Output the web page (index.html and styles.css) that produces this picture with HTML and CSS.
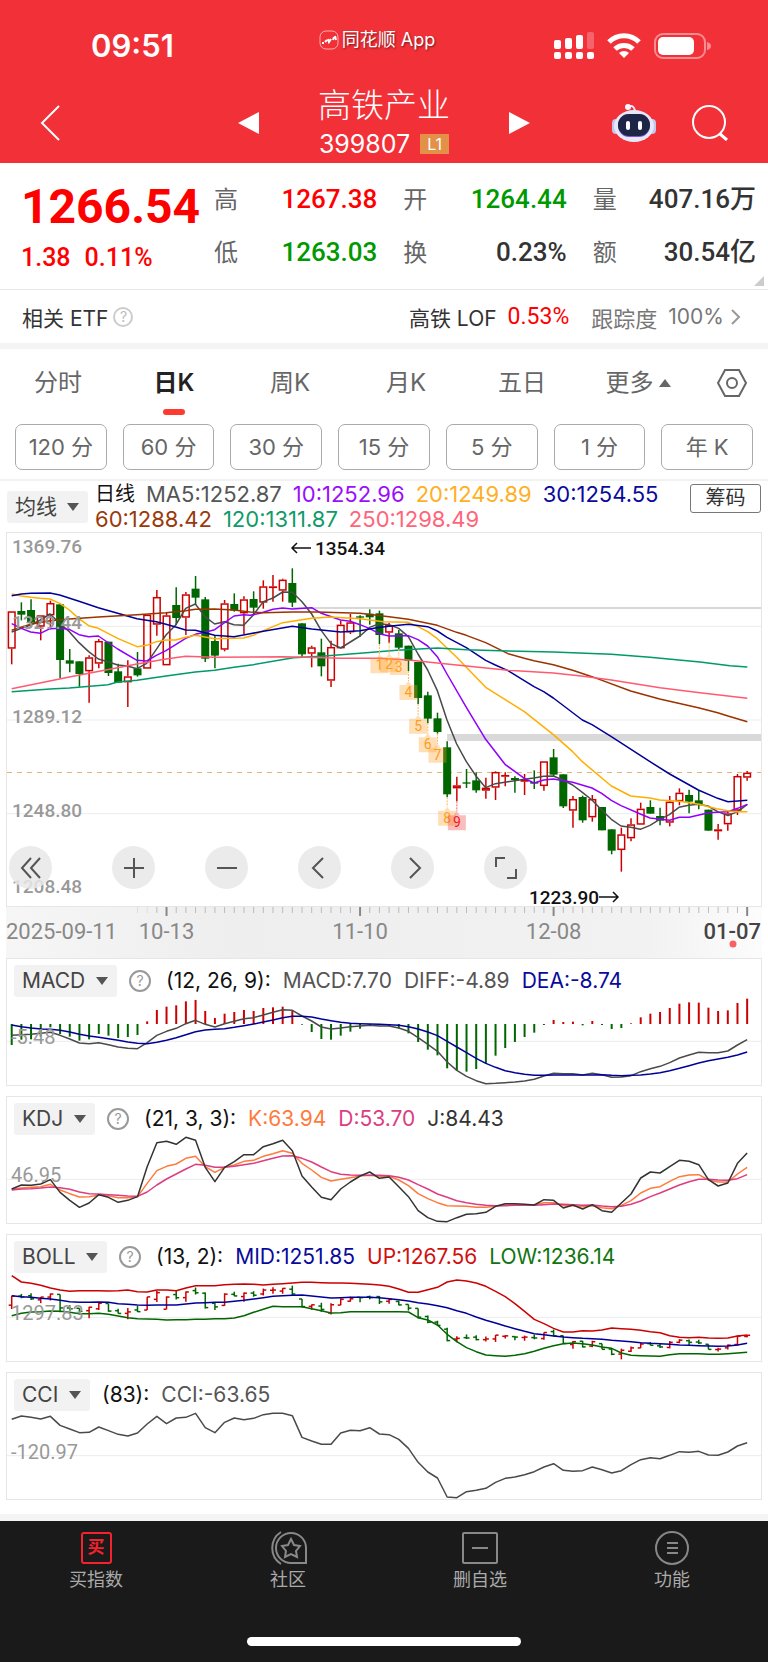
FILE: index.html
```html
<!DOCTYPE html>
<html lang="zh-CN">

<head>
    <meta charset="UTF-8" />
    <meta name="viewport" content="width=device-width, initial-scale=1.0" />
    <title>高铁产业 399807</title>
    <link rel="stylesheet" href="styles.css">
</head>

<body>
    <header>
        <div class="status">
            <span class="time">09:51</span>
            <span class="app">
                <svg width="20" height="20" viewBox="0 0 20 20" fill="none" stroke="#fff">
                    <rect x="1" y="1" width="18" height="18" rx="6" stroke-opacity=".6" />
                    <path d="M3 13h2M6 12l2-2M9 9l1 3 2-3M14 10l1-3M16 6l1 4" stroke-width="2" />
                </svg>
                同花顺 App
            </span>
            <span class="signals">
                <svg width="40" height="28" viewBox="0 0 40 28" fill="#fff">
                    <rect x="0" y="8" width="7" height="9" rx="2" />
                    <rect x="11" y="6" width="7" height="11" rx="2" />
                    <rect x="22" y="3" width="7" height="14" rx="2" />
                    <rect x="33" y="0" width="7" height="17" rx="2" opacity=".25" />
                    <rect x="0" y="20" width="7" height="7" rx="2" />
                    <rect x="11" y="20" width="7" height="7" rx="2" />
                    <rect x="22" y="20" width="7" height="7" rx="2" />
                    <rect x="33" y="20" width="7" height="7" rx="2" />
                </svg>
                <svg width="34" height="26" viewBox="0 0 34 26" fill="none" stroke="#fff" stroke-width="5">
                    <path d="M2 9a21 21 0 0 1 30 0M8 16a13 13 0 0 1 18 0" />
                    <path d="M17 25l-5-5a7 7 0 0 1 10 0z" fill="#fff" stroke="none" />
                </svg>
                <svg width="57" height="26" viewBox="0 0 57 26">
                    <rect x="1" y="1" width="50" height="24" rx="8" fill="none" stroke="#fff" stroke-opacity=".45" stroke-width="2" />
                    <rect x="4" y="4" width="36" height="18" rx="5" fill="#fff" />
                    <path d="M53 9q4 1 4 4t-4 4z" fill="#fff" opacity=".45" />
                </svg>
            </span>
        </div>
        <nav class="titlebar">
            <button class="back" aria-label="返回">
                <svg width="20" height="36" viewBox="0 0 20 36" fill="none" stroke="#fff" stroke-width="2"><path d="M19 1L2 18l17 17" /></svg>
            </button>
            <div class="switcher">
                <button aria-label="上一个"><svg width="21" height="22" viewBox="0 0 21 22"><path d="M21 0v22L0 11z" fill="#fff" /></svg></button>
                <div class="stock">
                    <h1>高铁产业</h1>
                    <p>399807<span class="level">L1</span></p>
                </div>
                <button aria-label="下一个"><svg width="21" height="22" viewBox="0 0 21 22"><path d="M0 0v22l21-11z" fill="#fff" /></svg></button>
            </div>
            <div class="tools">
                <button aria-label="助手">
                    <svg width="44" height="40" viewBox="0 0 44 40">
                        <path d="M16 4q6-3 7 4" fill="none" stroke="#e8ecff" stroke-width="2" />
                        <circle cx="16" cy="4" r="3" fill="#f4f5ff" />
                        <rect x="0" y="16" width="9" height="15" rx="4" fill="#c3c6ee" />
                        <rect x="35" y="16" width="9" height="15" rx="4" fill="#c3c6ee" />
                        <ellipse cx="22" cy="23" rx="20" ry="16" fill="#e6e8f8" />
                        <rect x="6" y="11" width="32" height="23" rx="11" fill="#7a55d8" />
                        <rect x="6" y="11" width="32" height="22" rx="11" fill="#1d2647" />
                        <rect x="14" y="18" width="4" height="9" rx="2" fill="#fff" />
                        <rect x="26" y="18" width="4" height="9" rx="2" fill="#fff" />
                    </svg>
                </button>
                <button aria-label="搜索">
                    <svg width="36" height="36" viewBox="0 0 36 36" fill="none" stroke="#fff" stroke-width="2"><circle cx="17" cy="17" r="16" /><path d="M28 29l7 6" stroke-width="3" /></svg>
                </button>
            </div>
        </nav>
    </header>

    <main>
        <section class="quote">
            <div class="price">
                <strong>1266.54</strong>
                <p><span>1.38</span><span>0.11%</span></p>
            </div>
            <dl class="facts">
                <div><dt>高</dt><dd class="up">1267.38</dd></div>
                <div><dt>开</dt><dd class="down">1264.44</dd></div>
                <div><dt>量</dt><dd>407.16万</dd></div>
                <div><dt>低</dt><dd class="down">1263.03</dd></div>
                <div><dt>换</dt><dd>0.23%</dd></div>
                <div><dt>额</dt><dd>30.54亿</dd></div>
            </dl>
            <span class="corner"></span>
        </section>

        <section class="etf">
            <span>相关 ETF</span>
            <span class="help light">?</span>
            <a href="#lof">
                <span>高铁 LOF</span>
                <b>0.53%</b>
                <span class="muted">跟踪度</span>
                <span class="muted">100%</span>
                <svg width="10" height="16" viewBox="0 0 10 16" fill="none" stroke="#999" stroke-width="2"><path d="M1 1l7 7-7 7" /></svg>
            </a>
        </section>

        <nav class="tabs">
            <a href="#min">分时</a>
            <a href="#day" class="active">日K</a>
            <a href="#week">周K</a>
            <a href="#month">月K</a>
            <a href="#five">五日</a>
            <a href="#more">更多<i></i></a>
            <button aria-label="设置">
                <svg width="30" height="28" viewBox="0 0 30 28" fill="none" stroke="#666" stroke-width="2"><path d="M8 1h14l7 13-7 13H8L1 14z" /><circle cx="15" cy="14" r="5" /></svg>
            </button>
        </nav>

        <div class="periods">
            <button>120 分</button>
            <button>60 分</button>
            <button>30 分</button>
            <button>15 分</button>
            <button>5 分</button>
            <button>1 分</button>
            <button>年 K</button>
        </div>

        <section class="averages">
            <label class="pick"><select aria-label="指标"><option>均线</option></select></label>
            <p class="values">
                <span class="black period">日线</span>
                <span class="ma5">MA5:1252.87</span>
                <span class="ma10">10:1252.96</span>
                <span class="ma20">20:1249.89</span>
                <span class="ma30">30:1254.55</span>
                <span class="ma60">60:1288.42</span>
                <span class="ma120">120:1311.87</span>
                <span class="ma250">250:1298.49</span>
            </p>
            <button class="chips">筹码</button>
        </section>

        <section class="chart">
            <svg id="kline" viewBox="0 0 754 373"></svg>
            <div class="controls">
                <button aria-label="最左"><svg viewBox="0 0 22 22"><path d="M11 1L2 11l9 10M20 1l-9 10 9 10" /></svg></button>
                <button aria-label="放大"><svg viewBox="0 0 22 22"><path d="M11 1v20M1 11h20" /></svg></button>
                <button aria-label="缩小"><svg viewBox="0 0 22 22"><path d="M1 11h20" /></svg></button>
                <button aria-label="左移"><svg viewBox="0 0 22 22"><path d="M14 1L4 11l10 10" /></svg></button>
                <button aria-label="右移"><svg viewBox="0 0 22 22"><path d="M8 1l10 10L8 21" /></svg></button>
                <button aria-label="全屏"><svg viewBox="0 0 22 22"><path d="M1 10V1h9M21 12v9h-9" /></svg></button>
            </div>
        </section>
        <svg id="timeline" class="timeline" viewBox="0 0 756 51"></svg>

        <section class="panel">
            <header>
                <label class="pick"><select aria-label="指标"><option>MACD</option></select></label>
                <span class="help">?</span>
                <span class="black">(12, 26, 9):</span>
                <span class="ma5">MACD:7.70</span>
                <span class="ma5">DIFF:-4.89</span>
                <span class="ma30">DEA:-8.74</span>
            </header>
            <svg id="macd" viewBox="0 0 754 85"></svg>
        </section>

        <section class="panel">
            <header>
                <label class="pick"><select aria-label="指标"><option>KDJ</option></select></label>
                <span class="help">?</span>
                <span class="black">(21, 3, 3):</span>
                <span class="k">K:63.94</span>
                <span class="d">D:53.70</span>
                <span class="j">J:84.43</span>
            </header>
            <svg id="kdj" viewBox="0 0 754 85"></svg>
        </section>

        <section class="panel">
            <header>
                <label class="pick"><select aria-label="指标"><option>BOLL</option></select></label>
                <span class="help">?</span>
                <span class="black">(13, 2):</span>
                <span class="ma30">MID:1251.85</span>
                <span class="upper">UP:1267.56</span>
                <span class="lower">LOW:1236.14</span>
            </header>
            <svg id="boll" viewBox="0 0 754 85"></svg>
        </section>

        <section class="panel">
            <header>
                <label class="pick"><select aria-label="指标"><option>CCI</option></select></label>
                <span class="black">(83):</span>
                <span class="ma5">CCI:-63.65</span>
            </header>
            <svg id="cci" viewBox="0 0 754 85"></svg>
        </section>
    </main>

    <footer>
        <nav>
            <a href="#buy">
                <span class="buy">买</span>
                买指数
            </a>
            <a href="#community">
                <svg width="38" height="34" viewBox="0 0 38 34">
                    <path d="M12 1A19 19 0 0 0 12 33M22 2a15 15 0 1 0 0 30h15V17A15 15 0 0 0 22 2z" />
                    <path d="M22 8l3 6 6 1-4 5 1 6-6-3-6 3 1-6-4-5 6-1z" />
                </svg>
                社区
            </a>
            <a href="#remove">
                <svg width="36" height="34" viewBox="0 0 36 34"><rect x="1" y="2" width="34" height="30" rx="1" /><path d="M10 17h16" /></svg>
                删自选
            </a>
            <a href="#tools">
                <svg width="34" height="34" viewBox="0 0 34 34"><circle cx="17" cy="17" r="16" /><path d="M12 12h11M12 17h11M12 22h11" /></svg>
                功能
            </a>
        </nav>
        <div class="homebar"></div>
    </footer>

    <script src="app.js"></script>
</body>

</html>
```

FILE: styles.css
```css
/* Reset CSS */
* {
    margin: 0;
    padding: 0;
    box-sizing: border-box;
}

/* Global Styles */
body {
    font-family: Inter, "Noto Sans CJK SC", sans-serif;
    background-color: #fff;
    color: #333;
}

button,
select {
    font: inherit;
    color: inherit;
    background: none;
    border: none;
    cursor: pointer;
}

a {
    color: inherit;
    text-decoration: none;
}

svg {
    display: block;
    flex-shrink: 0;
}

/* Header */
body > header {
    background-color: #f23038;
    color: #fff;
}

.status {
    display: grid;
    grid-template-columns: 1fr auto 1fr;
    align-items: center;
    height: 75px;
    padding: 16px 57px 0 91px;
}

.time {
    font-size: 31px;
    font-weight: 600;
    line-height: 40px;
}

.app {
    display: flex;
    align-items: center;
    gap: 3px;
    margin: 0 48px 12px 0;
    font-size: 18px;
    line-height: 24px;
    text-shadow: 1px 1px 2px rgba(0, 0, 0, 0.5);
}

.signals {
    display: flex;
    align-items: center;
    justify-content: flex-end;
    gap: 13px;
}

.titlebar {
    display: grid;
    grid-template-columns: 1fr auto 1fr;
    align-items: center;
    height: 88px;
    padding: 8px 40px 0;
}

.switcher {
    display: flex;
    align-items: center;
    gap: 59px;
}

.stock {
    text-align: center;
}

.stock h1 {
    font-size: 33px;
    font-weight: 300;
    line-height: 42px;
}

.stock p {
    display: flex;
    align-items: center;
    justify-content: center;
    gap: 10px;
    font-size: 25px;
    line-height: 36px;
}

.level {
    padding: 0 7px;
    background-color: #e39048;
    font-size: 16px;
    line-height: 20px;
}

.tools {
    display: flex;
    align-items: center;
    justify-content: flex-end;
    gap: 36px;
}

/* Quote */
.quote {
    position: relative;
    display: flex;
    height: 127px;
    padding: 10px 12px 0 21px;
    border-bottom: 1px solid #e8e8e8;
}

.price {
    width: 193px;
    color: #f00;
    font-family: Roboto, sans-serif;
    font-weight: 500;
}

.price strong {
    display: block;
    font-size: 48px;
    font-weight: 700;
    line-height: 68px;
}

.price p {
    display: flex;
    gap: 14px;
    font-size: 25px;
    line-height: 34px;
}

.facts {
    flex: 1;
    display: grid;
    grid-template-columns: repeat(3, 1fr);
    grid-auto-rows: 53px;
    column-gap: 26px;
}

.facts div {
    display: flex;
    align-items: center;
    justify-content: space-between;
    font-size: 26px;
    line-height: 53px;
}

.facts dt {
    color: #666;
    font-size: 24px;
}

.facts dd {
    font-family: Roboto, "Noto Sans CJK SC", sans-serif;
    font-weight: 500;
}

.facts .up {
    color: #f00;
}

.facts .down {
    color: #090;
}

.corner {
    position: absolute;
    right: 4px;
    bottom: 3px;
    border: 5px solid;
    border-color: transparent #ccc #ccc transparent;
}

.etf {
    display: flex;
    align-items: center;
    height: 59px;
    padding: 0 27px 0 22px;
    border-bottom: 6px solid #f4f4f4;
    font-size: 21px;
}

.etf a {
    display: flex;
    align-items: center;
    gap: 11px;
    margin-left: auto;
}

.etf b {
    color: #f00;
    font-family: Roboto, sans-serif;
    font-size: 23px;
    font-weight: 400;
}

.etf .muted {
    color: #777;
}

.etf b + .muted {
    margin-left: 11px;
    font-size: 22px;
}

.etf svg {
    margin-left: -4px;
}

.help {
    width: 22px;
    height: 22px;
    border: 2px solid #999;
    border-radius: 50%;
    color: #999;
    font-size: 14px;
    line-height: 18px;
    text-align: center;
}

.etf .help {
    width: 20px;
    height: 20px;
    margin-left: 5px;
    line-height: 16px;
}

.light {
    border-color: #ccc;
    color: #bbb;
}

/* Tabs */
.tabs {
    display: flex;
    height: 75px;
    color: #666;
    font-size: 24px;
    line-height: 68px;
}

.tabs a {
    position: relative;
    flex: 1;
    display: flex;
    align-items: center;
    justify-content: center;
    height: 68px;
}

.tabs button {
    display: flex;
    align-items: center;
    justify-content: center;
    width: 72px;
    height: 68px;
}

.tabs .active {
    color: #222;
    font-weight: 600;
}

.tabs .active::after {
    content: "";
    position: absolute;
    bottom: 2px;
    width: 22px;
    height: 6px;
    border-radius: 3px;
    background-color: #ff3a30;
}

.tabs i {
    margin-left: 5px;
    border: 6px solid transparent;
    border-top: none;
    border-bottom: 8px solid #666;
}

.periods {
    display: flex;
    gap: 16px;
    height: 57px;
    padding: 0 15px 10px;
    border-bottom: 2px solid #f2f2f2;
}

.periods button {
    flex: 1;
    height: 46px;
    border: 1px solid #aaa;
    border-radius: 7px;
    color: #666;
    font-size: 22px;
    line-height: 44px;
    white-space: nowrap;
}

/* Indicator values */
.averages {
    display: flex;
    align-items: center;
    height: 51px;
    padding: 0 7px;
}

.values {
    flex: 1;
    display: flex;
    flex-wrap: wrap;
    column-gap: 11px;
    padding-left: 7px;
    font-size: 22px;
    line-height: 25px;
    white-space: nowrap;
}

.period {
    font-size: 20px;
}

.chips {
    align-self: flex-start;
    width: 71px;
    height: 29px;
    margin-top: 3px;
    border: 1px solid #777;
    border-radius: 3px;
    font-size: 20px;
    line-height: 27px;
}

.pick {
    display: flex;
    align-items: center;
    gap: 10px;
    height: 32px;
    padding: 0 9px 0 8px;
    border-radius: 3px;
    background-color: #f2f2f2;
    color: #444;
    font-size: 21px;
}

.pick select {
    appearance: none;
    line-height: 32px;
}

.pick::after {
    content: "";
    border: 6px solid transparent;
    border-top: 8px solid #555;
    border-bottom: none;
}

.black { color: #111; }
.ma5 { color: #555; }
.ma10 { color: #9a0ffb; }
.ma20 { color: #ffb01f; }
.ma30 { color: #0a0a9c; }
.ma60 { color: #993a0c; }
.ma120 { color: #109b6a; }
.ma250 { color: #ff6479; }
.k { color: #ff7a3c; }
.d { color: #dd3d80; }
.j { color: #333; }
.upper { color: #d01010; }
.lower { color: #107510; }

/* Charts */
.chart {
    position: relative;
    margin: 0 6px;
    border: 1px solid #e6e6e6;
}

.chart svg,
.panel svg {
    width: 100%;
    height: auto;
    overflow: visible;
}

.chart text,
.panel text,
.timeline text {
    font-family: Roboto, sans-serif;
    font-size: 19px;
    font-weight: 500;
    fill: #999;
}

.panel text {
    font-size: 20px;
    font-weight: 400;
}

.chart .extreme {
    fill: #111;
}

.chart .mark {
    font-size: 14px;
    font-weight: 400;
    text-anchor: middle;
}

.timeline text {
    font-size: 22px;
    font-weight: 400;
    fill: #888;
}

.timeline .middle {
    text-anchor: middle;
}

.timeline .last {
    font-weight: 500;
    text-anchor: end;
    fill: #444;
}

.controls {
    position: absolute;
    left: 2px;
    bottom: 17px;
    display: flex;
    gap: 50px;
}

.controls button {
    display: flex;
    align-items: center;
    justify-content: center;
    width: 43px;
    height: 43px;
    border-radius: 50%;
    background-color: rgba(232, 232, 232, 0.85);
}

.controls button:first-child {
    margin-right: 10px;
}

.controls svg {
    width: 22px;
    height: 22px;
    fill: none;
    stroke: #555;
    stroke-width: 2;
}

.timeline {
    width: calc(100% - 12px);
    margin: 0 6px;
    background: linear-gradient(90deg, #f6f6f6, #eee 30%, #f2f2f2 85%, #fcfcfc);
}

.panel {
    margin: 0 6px 10px;
    border: 1px solid #e6e6e6;
}

.panel header {
    display: flex;
    align-items: center;
    gap: 12px;
    height: 41px;
    padding: 2px 7px 0;
    font-size: 21px;
    white-space: nowrap;
}

.panel .help {
    margin-right: 3px;
}

/* Footer */
footer {
    height: 148px;
    margin-top: 14px;
    padding-top: 10px;
    border-top: 7px solid #f4f4f4;
    background-color: #1a1a1a;
}

footer nav {
    display: flex;
    height: 106px;
}

footer a {
    flex: 1;
    display: flex;
    flex-direction: column;
    align-items: center;
    color: #aaa;
    font-size: 18px;
    line-height: 30px;
}

footer a svg {
    fill: none;
    stroke: #888;
    stroke-width: 2;
}

.buy {
    width: 31px;
    height: 32px;
    margin: 1px 0;
    border: 2px solid #f5222d;
    border-radius: 3px;
    color: #f5222d;
    font-size: 17px;
    font-weight: 700;
    line-height: 27px;
    text-align: center;
}

.homebar {
    width: 274px;
    height: 9px;
    margin: 0 auto;
    border-radius: 5px;
    background-color: #fff;
}
```

FILE: app.js
```js
// Candles: color, high, body top, body bottom, low (thirds of a pixel)
var candles = [
    "r 244 244 356 403", "g 217 243 254 271", "g 208 240 278 292", "r 256 256 290 331", "r 212 219 256 298",
    "g 223 223 390 444", "g 357 391 401 427", "g 394 394 432 470", "r 376 382 424 518", "r 327 333 401 415",
    "g 335 335 429 438", "g 401 424 458 458", "r 391 439 457 531", "g 366 415 436 440", "r 254 254 416 416",
    "r 180 201 284 317", "r 248 256 406 406", "g 172 225 264 285", "r 186 193 263 315", "g 138 176 203 225",
    "g 201 208 386 396", "g 316 333 377 415", "r 210 220 359 364", "g 190 222 242 245", "r 199 208 250 313",
    "g 184 207 233 252", "r 151 169 218 236", "r 135 169 172 215", "r 146 149 182 215", "g 115 159 218 231",
    "g 280 280 373 384", "r 347 352 371 412", "g 326 367 409 439", "r 332 351 452 471", "r 272 284 355 355",
    "r 252 277 307 312", "g 256 259 263 320", "g 238 251 262 284", "g 242 250 315 342", "r 278 285 308 338",
    "g 300 310 353 358", "g 347 347 393 423", "g 396 396 504 522", "g 485 496 566 580", "g 548 565 606 611",
    "g 634 652 793 802", "r 740 766 775 814", "g 717 757 761 774", "g 727 751 781 788", "r 743 773 782 806",
    "r 724 726 773 810", "r 727 735 740 769", "g 739 744 750 788", "r 732 750 755 795", "g 721 756 761 777",
    "r 694 694 768 782", "g 657 682 734 740", "g 733 733 829 834", "r 798 807 842 893", "g 797 801 871 878",
    "r 795 807 862 875", "g 831 831 901 901", "g 898 898 962 973", "r 893 913 960 1025", "r 865 883 925 934",
    "r 818 836 884 884", "g 811 831 851 851", "g 833 858 872 886", "r 798 815 878 889", "r 775 788 814 826",
    "g 779 795 815 850", "g 782 811 823 838", "g 839 839 902 902", "r 882 898 904 929", "r 843 850 883 902",
    "r 732 738 842 855", "r 723 728 743 752"
].map(function (row) {
    var c = row.split(" ");
    return { color: c[0] === "r" ? "#cc0000" : "#006600", high: +c[1], top: +c[2], bottom: +c[3], low: +c[4] };
});

// Moving averages as x,y pairs
var averages = {
    "#4a4a4a": "35,306 64,295 92,285 121,270 150,252 179,280 208,305 237,338 266,365 295,387 324,395 353,405 382,408 411,416 440,400 469,358 498,315 527,285 557,235 586,222 615,260 644,282 673,275 702,284 731,286 760,255 790,215 819,204 848,186 877,187 906,215 935,252 964,302 993,341 1022,354 1051,336 1080,318 1109,292 1138,281 1167,284 1196,295 1225,320 1254,372 1283,420 1312,482 1341,570 1370,642 1399,695 1428,738 1457,773 1486,761 1524,755 1573,748 1602,744 1631,739 1660,738 1689,750 1718,765 1747,787 1776,810 1805,840 1834,868 1863,888 1892,892 1921,898 1950,886 1979,868 2008,854 2037,832 2066,826 2095,823 2124,828 2153,845 2184,857 2213,845 2242,823",
    "#9000ff": "35,281 64,295 92,306 121,310 150,296 179,295 208,298 237,314 266,320 295,318 353,357 411,391 440,393 469,376 498,362 557,325 586,313 615,307 644,299 702,258 731,254 750,256 780,250 819,238 848,234 877,237 935,233 964,250 1022,270 1051,274 1080,284 1109,296 1138,311 1167,318 1225,317 1254,329 1283,348 1312,380 1341,432 1399,532 1457,628 1515,703 1573,745 1602,759 1631,750 1660,747 1718,757 1776,774 1805,790 1834,811 1863,827 1921,852 1950,864 2009,871 2038,862 2068,862 2097,855 2126,848 2184,845 2213,835 2242,823",
    "#ffae00": "35,192 64,198 92,202 121,205 150,207 179,220 208,240 237,266 266,287 295,295 353,325 411,350 440,346 469,335 498,330 527,330 557,322 586,316 644,326 731,324 760,316 790,302 848,278 935,265 992,261 1080,266 1150,275 1225,277 1254,290 1283,305 1312,326 1370,382 1399,412 1457,472 1524,514 1573,545 1660,614 1718,665 1747,695 1834,768 1892,798 1950,804 1979,810 2038,814 2068,818 2097,823 2150,836 2200,845 2242,845",
    "#000099": "35,197 64,192 92,190 150,189 179,195 237,214 295,233 411,266 469,275 498,283 527,291 557,300 586,301 644,316 702,320 750,311 790,304 877,289 935,297 1022,306 1080,302 1130,293 1167,289 1225,283 1283,290 1312,303 1341,322 1399,353 1457,391 1486,405 1524,422 1602,470 1631,485 1660,504 1747,570 1776,584 1834,620 1950,695 2009,732 2095,780 2153,805 2184,815 2242,811",
    "#993300": "35,301 92,283 150,272 208,267 295,261 411,254 498,248 527,245 557,242 586,238 644,237 702,240 750,246 790,248 877,246 950,246 1080,250 1167,260 1225,268 1312,286 1370,307 1399,316 1457,338 1524,371 1573,385 1602,392 1660,404 1718,421 1776,440 1892,483 1979,507 2095,533 2153,548 2184,558 2242,575",
    "#00996a": "35,485 150,477 208,474 324,464 353,456 411,451 498,438 586,426 644,421 702,412 760,404 880,383 964,379 1080,370 1190,361 1312,354 1400,359 1524,363 1660,366 1834,373 1950,382 2100,396 2190,407 2242,411",
    "#ff5a70": "35,476 208,441 411,402 498,387 557,379 644,382 760,381 848,380 920,382 1022,385 1138,385 1225,390 1370,405 1524,421 1660,429 1750,439 1834,450 1980,473 2100,488 2242,505"
};

// Nine-turn marks: candle index, y of the box centre
var marks = [[38, 406], [39, 403], [40, 411], [41, 486], [42, 587], [43, 643], [44, 674], [45, 863], [46, 877]];

var macdBars = [435, 419, 418, 410, 382, 402, 410, 422, 418, 402, 407, 414, 411, 405, 364, 330, 320, 316, 304, 300, 333, 354, 341, 336, 330, 333, 324, 322, 320, 332, 374, 396, 417, 419, 407, 395, 386, 376, 376, 378, 385, 400, 426, 449, 466, 505, 513, 515, 507, 490, 467, 444, 426, 411, 398, 375, 360, 366, 365, 376, 363, 375, 387, 384, 370, 352, 341, 336, 324, 311, 307, 308, 323, 333, 331, 309, 296];
var diff = [406, 404, 403, 400, 397, 406, 417, 429, 431, 428, 434, 441, 445, 446, 428, 406, 394, 385, 371, 361, 373, 381, 371, 364, 356, 353, 345, 337, 329, 331, 348, 363, 381, 387, 384, 380, 378, 376, 378, 378, 384, 394, 413, 433, 454, 486, 511, 529, 542, 551, 550, 548, 546, 543, 538, 528, 520, 521, 521, 525, 520, 524, 532, 531, 527, 515, 506, 499, 488, 474, 465, 457, 458, 458, 453, 435, 419];
var dea = [375, 380, 384, 387, 388, 391, 396, 403, 408, 412, 416, 421, 426, 430, 431, 427, 421, 413, 404, 395, 390, 388, 386, 382, 377, 372, 366, 360, 353, 349, 349, 351, 357, 362, 367, 370, 371, 372, 373, 374, 376, 380, 387, 396, 407, 424, 441, 458, 475, 490, 502, 512, 518, 523, 526, 526, 525, 525, 525, 525, 525, 524, 526, 527, 526, 525, 522, 518, 512, 505, 497, 489, 482, 477, 472, 465, 456];
var kdjJ = [297, 285, 286, 282, 269, 307, 331, 352, 339, 314, 322, 337, 331, 320, 230, 158, 154, 163, 142, 151, 232, 275, 232, 215, 194, 194, 170, 161, 151, 182, 258, 291, 322, 329, 297, 276, 258, 246, 265, 261, 290, 320, 362, 383, 394, 395, 383, 373, 371, 367, 349, 341, 341, 343, 345, 329, 331, 354, 345, 357, 344, 362, 367, 339, 312, 264, 246, 249, 230, 211, 214, 224, 269, 288, 279, 220, 189];
var kdjK = [298, 294, 292, 290, 283, 300, 311, 321, 320, 315, 317, 323, 323, 320, 280, 242, 229, 222, 205, 199, 230, 247, 232, 225, 214, 211, 199, 191, 182, 190, 220, 240, 262, 273, 268, 263, 258, 256, 259, 259, 270, 287, 311, 326, 338, 347, 348, 349, 352, 352, 349, 345, 345, 345, 345, 338, 338, 347, 347, 350, 347, 353, 356, 346, 332, 309, 295, 290, 274, 260, 255, 254, 270, 276, 276, 252, 232];
var kdjD = [300, 297, 296, 294, 291, 293, 298, 306, 311, 312, 314, 316, 318, 319, 306, 285, 267, 252, 237, 223, 226, 232, 232, 229, 224, 220, 212, 205, 198, 197, 205, 216, 231, 245, 253, 255, 256, 256, 256, 257, 262, 270, 284, 297, 312, 322, 332, 338, 343, 346, 347, 347, 346, 346, 346, 344, 342, 343, 344, 346, 345, 348, 350, 349, 343, 333, 320, 309, 297, 285, 275, 268, 268, 270, 271, 266, 254];
var bollUp = [152, 171, 175, 181, 189, 195, 199, 197, 197, 197, 198, 197, 195, 200, 201, 195, 195, 197, 189, 182, 182, 182, 179, 178, 177, 178, 180, 178, 176, 174, 172, 172, 173, 174, 174, 175, 176, 178, 180, 184, 192, 202, 202, 194, 187, 171, 165, 168, 174, 184, 199, 215, 236, 259, 283, 296, 310, 321, 321, 317, 318, 315, 309, 311, 313, 316, 320, 323, 332, 337, 338, 337, 339, 340, 339, 333, 330];
var bollMid = [212, 215, 217, 220, 222, 226, 230, 232, 232, 231, 232, 236, 238, 240, 241, 240, 240, 240, 237, 234, 233, 232, 232, 229, 226, 222, 218, 214, 212, 211, 210, 213, 216, 219, 218, 217, 217, 217, 218, 221, 224, 228, 233, 237, 242, 248, 257, 265, 276, 286, 294, 303, 311, 319, 326, 329, 333, 336, 338, 340, 341, 343, 346, 348, 350, 353, 355, 356, 358, 360, 361, 362, 363, 364, 363, 360, 355];
var bollLow = [272, 265, 261, 260, 258, 259, 262, 266, 266, 265, 268, 273, 278, 281, 282, 283, 285, 284, 284, 283, 283, 281, 281, 279, 272, 262, 253, 244, 245, 245, 245, 251, 257, 264, 263, 260, 260, 260, 260, 260, 260, 261, 278, 285, 300, 328, 350, 368, 380, 390, 392, 394, 391, 386, 379, 370, 362, 356, 354, 356, 360, 366, 370, 384, 391, 392, 393, 394, 389, 386, 386, 386, 388, 388, 386, 384, 382];
var cci = [163, 153, 157, 162, 154, 181, 192, 203, 202, 186, 197, 208, 213, 204, 177, 154, 176, 159, 157, 145, 188, 203, 172, 159, 164, 160, 149, 145, 145, 152, 217, 228, 238, 238, 204, 196, 197, 188, 207, 209, 223, 250, 292, 321, 339, 396, 398, 380, 376, 370, 352, 340, 336, 329, 320, 306, 296, 316, 319, 317, 306, 314, 324, 317, 299, 284, 278, 281, 271, 260, 262, 259, 270, 271, 261, 243, 233];

function x(i) {
    return 4.7 + i * 9.677;
}

function line(x1, y1, x2, y2, color, width) {
    return '<line x1="' + x1 + '" y1="' + y1 + '" x2="' + x2 + '" y2="' + y2 + '" stroke="' + color + '" stroke-width="' + (width || 1) + '"/>';
}

function rect(left, top, w, h, fill, stroke) {
    return '<rect x="' + left + '" y="' + top + '" width="' + w + '" height="' + h + '" fill="' + fill + '"' +
        (stroke ? ' stroke="' + stroke + '" stroke-width="1.5"' : '') + '/>';
}

function text(left, y, value, cls, fill) {
    return '<text x="' + left + '" y="' + y + '" class="' + (cls || '') + '"' + (fill ? ' style="fill:' + fill + '"' : '') + '>' + value + '</text>';
}

function path(points, color) {
    return '<polyline points="' + points + '" fill="none" stroke="' + color + '" stroke-width="1.5" stroke-linejoin="round"/>';
}

function series(values, offset, color) {
    return path(values.map(function (v, i) {
        return x(i) + ',' + (v - offset) / 3;
    }).join(' '), color);
}

function drawKline() {
    var out = '';
    [289, 570, 851].forEach(function (y) {
        out += line(0, y / 3 - 3, 754, y / 3 - 3, '#ececec');
    });
    // price gaps
    out += rect(x(29), 74, 754 - x(29), 2, '#d8d8d8');
    out += rect(x(45), 201, 754 - x(45), 7, '#d9d9d9');
    out += '<path d="M0 239.5H754" stroke="#dcb47c" stroke-dasharray="5 5"/>';
    candles.forEach(function (c, i) {
        var top = c.top / 3 - 3, bottom = c.bottom / 3 - 3;
        if (c.color === '#006600') {
            out += line(x(i), c.high / 3 - 3, x(i), c.low / 3 - 3, c.color, 1.5);
            out += rect(x(i) - 4, top, 8, bottom - top, c.color);
        } else {
            out += line(x(i), c.high / 3 - 3, x(i), top, c.color, 1.5);
            out += line(x(i), bottom, x(i), c.low / 3 - 3, c.color, 1.5);
            out += rect(x(i) - 3.3, top + 0.7, 6.6, Math.max(bottom - top - 1.4, 0.3), 'none', c.color);
        }
    });
    for (var color in averages) {
        out += path(averages[color].split(' ').map(function (p) {
            var xy = p.split(',');
            return (xy[0] / 3 - 7) + ',' + (xy[1] / 3 - 3);
        }).join(' '), color);
    }
    marks.forEach(function (m, n) {
        var cx = x(m[0]), cy = m[1] / 3 - 3, red = n === 8;
        out += '<path d="M' + cx + ' ' + (candles[m[0]].low / 3 - 3) + 'V' + (cy - 11) + '" stroke="' + (red ? '#ee6666' : '#ffb655') + '" stroke-dasharray="2 1"/>';
        out += '<path d="M' + (cx - 9) + ' ' + (cy - 7) + 'h6l3-4 3 4h6v15h-18z" fill="' + (red ? '#ee3333' : '#ff9d20') + '" fill-opacity=".32"/>';
        out += text(cx, cy + 5, n + 1, 'mark', red ? '#ee2222' : '#ff9d20');
    });
    [[70, '1369.76'], [297, '1329.44'], [580, '1289.12'], [861, '1248.80'], [1089, '1208.48']].forEach(function (l) {
        out += text(5, l[0] / 3 - 3, l[1]);
    });
    out += text(308, 22, '1354.34', 'extreme');
    out += '<path d="M304 15h-19M290 10l-5 5 5 5" fill="none" stroke="#111" stroke-width="1.5"/>';
    out += text(522, 371, '1223.90', 'extreme');
    out += '<path d="M592 364h19M606 359l5 5-5 5" fill="none" stroke="#111" stroke-width="1.5"/>';
    document.getElementById('kline').innerHTML = out;
}

function drawTimeline() {
    var out = '';
    for (var i = 13; i < 77; i++) {
        var major = i % 20 === 16;
        out += line(x(i) + 1, 0, x(i) + 1, major ? 9 : 6, i < 15 ? '#ddd' : major ? '#888' : '#bbb', major ? 2 : 1);
    }
    out += text(0, 32, '2025-09-11');
    out += text(x(16) + 1, 32, '10-13', 'middle');
    out += text(x(36) + 1, 32, '11-10', 'middle');
    out += text(x(56) + 1, 32, '12-08', 'middle');
    out += text(755, 32, '01-07', 'last');
    out += '<circle cx="727" cy="37" r="3.5" fill="#f96060"/>';
    document.getElementById('timeline').innerHTML = out;
}

// offset is the series value that lies on the top edge of the drawing
function drawPanel(id, offset, grid, label, body) {
    var y = (grid - offset) / 3;
    document.getElementById(id).innerHTML = line(0, y, 754, y, '#ececec') + body + text(4, y + 3, label);
}

drawKline();
drawTimeline();

drawPanel('macd', 300, 424, '-5.48', macdBars.map(function (v, i) {
    return line(x(i), 24, x(i), (v - 300) / 3, v < 372 ? '#cc0000' : '#006600', 2);
}).join('') + series(diff, 300, '#4a4a4a') + series(dea, 300, '#000099'));

drawPanel('kdj', 144, 268, '46.95', series(kdjK, 144, '#ff7a3c') + series(kdjD, 144, '#dd3d80') + series(kdjJ, 144, '#333'));

drawPanel('boll', 153, 277, '1297.83', candles.map(function (c, i) {
    function y(v) {
        return (v * 0.243 + 1) / 3;
    }
    var up = c.color === '#cc0000';
    return line(x(i), y(c.high), x(i), y(c.low), c.color, 1.5) +
        line(x(i) - 3, y(up ? c.bottom : c.top), x(i), y(up ? c.bottom : c.top), c.color, 1.5) +
        line(x(i), y(up ? c.top : c.bottom), x(i) + 3, y(up ? c.top : c.bottom), c.color, 1.5);
}).join('') + series(bollUp, 153, '#cc0000') + series(bollMid, 153, '#000099') + series(bollLow, 153, '#006600'));

drawPanel('cci', 147, 272, '-120.97', series(cci, 147, '#4a4a4a'));
```
